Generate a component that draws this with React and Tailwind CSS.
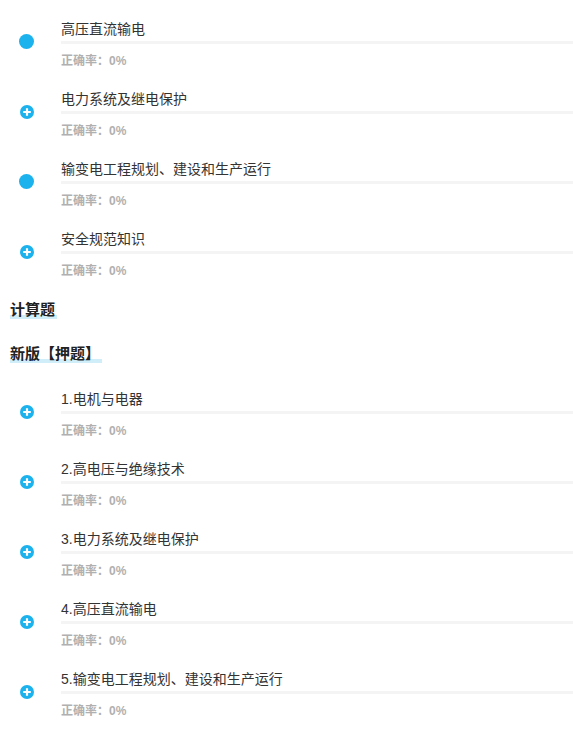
import React from "react";

const FONT = { fontFamily: '"Liberation Sans", "Noto Sans CJK SC", sans-serif' };

function Dot() {
  return (
    <svg width="15" height="15" viewBox="0 0 15 15">
      <circle cx="7.5" cy="7.5" r="7.5" fill="#1cb2ee" />
    </svg>
  );
}

function Plus() {
  return (
    <svg width="14" height="14" viewBox="0 0 14 14">
      <circle cx="7" cy="7" r="7" fill="#1cb2ee" />
      <path d="M7 3.2v7.6M3.2 7h7.6" stroke="#fff" strokeWidth="2.2" strokeLinecap="butt" />
    </svg>
  );
}

function Item({ title, dot }) {
  return (
    <div className="flex h-[70px]">
      <div className="w-[61px] shrink-0">
        {dot ? (
          <div className="pl-[19px] pt-[15px]"><Dot /></div>
        ) : (
          <div className="pl-[20px] pt-[16px]"><Plus /></div>
        )}
      </div>
      <div className="flex-1 flex flex-col">
        <div className="text-[14px] leading-[20px] text-[#333]">{title}</div>
        <div className="mt-[2px] h-[3px] bg-[#f4f4f4]" />
        <div className="mt-[9px] text-[12px] leading-[16px] font-bold text-[#b0b0b0]">正确率：0%</div>
      </div>
    </div>
  );
}

function Heading({ children }) {
  return (
    <div className="pl-[10px] text-[15px] leading-[20px] font-bold text-[#222]">
      <span className="inline-block pr-[2px] bg-[linear-gradient(#0000_15px,#cfeef9_15px,#cfeef9_19px,#0000_19px)]">
        {children}
      </span>
    </div>
  );
}

export default function App() {
  const top = [
    ["高压直流输电", true],
    ["电力系统及继电保护", false],
    ["输变电工程规划、建设和生产运行", true],
    ["安全规范知识", false],
  ];
  const bottom = [
    "1.电机与电器",
    "2.高电压与绝缘技术",
    "3.电力系统及继电保护",
    "4.高压直流输电",
    "5.输变电工程规划、建设和生产运行",
  ];
  return (
    <div className="w-[573px] h-[731px] bg-white overflow-hidden pt-[19px]" style={FONT}>
      {top.map(([t, d]) => (
        <Item key={t} title={t} dot={d} />
      ))}
      <div className="flex flex-col gap-[24px] pt-[1px]">
        <Heading>计算题</Heading>
        <Heading>新版【押题】</Heading>
      </div>
      <div className="mt-[25px]">
        {bottom.map((t) => (
          <Item key={t} title={t} dot={false} />
        ))}
      </div>
    </div>
  );
}
